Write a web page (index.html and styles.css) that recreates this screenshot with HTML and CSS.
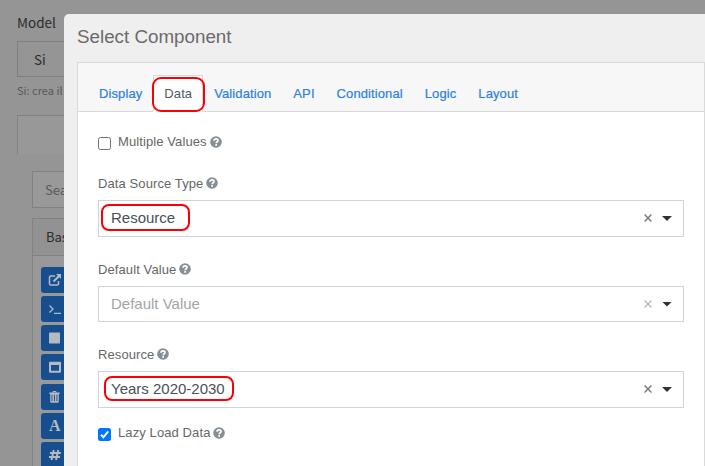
FILE: index.html
```html
<!DOCTYPE html>
<html lang="en">
<head>
<meta charset="utf-8">
<title>Select Component</title>
<link rel="stylesheet" href="styles.css">
</head>
<body>
<svg class="defs" width="0" height="0">
  <symbol id="help" viewBox="0 0 12 12"><circle cx="6" cy="6" r="5.8" fill="#868e96"/><path d="M4 4.7C4.1 2.2 8.1 2.2 8 4.5C8 5.8 6.3 5.7 6.2 7.2" fill="none" stroke="#fff" stroke-width="1.7"/><path d="M5.3 8.1h1.7v1.6H5.3z" fill="#fff"/></symbol>
  <symbol id="clear" viewBox="0 0 8 8"><path d="M.6.6l6.8 6.8M7.4.6L.6 7.4" fill="none" stroke="currentColor" stroke-width="1.4"/></symbol>
</svg>
<main class="page">
  <div class="field-title">Model</div>
  <div class="page-select">Si</div>
  <div class="hint">Si: crea il</div>
  <section class="builder">
    <div class="builder-head"></div>
    <div class="search">Search field(s)</div>
    <div class="group">
      <div class="group-head">Basic</div>
      <div class="group-body">
        <div class="item"><svg viewBox="0 0 14 14"><path d="M7 3H2.8Q1.5 3 1.5 4.3v6.4Q1.5 12 2.8 12h6.4q1.3 0 1.3-1.3V8" fill="none" stroke="currentColor" stroke-width="1.5"/><path d="M8 1h5v5l-1.7-1.7-5.1 5-1.4-1.5 5-5z"/></svg></div>
        <div class="item"><svg viewBox="0 0 14 14"><path d="M1.5 3.5L5 7l-3.5 3.5M6 11.4h7" fill="none" stroke="currentColor" stroke-width="1.3"/></svg></div>
        <div class="item"><svg viewBox="0 0 14 14"><rect x="1" y="1.5" width="11" height="11" rx=".7"/></svg></div>
        <div class="item"><svg viewBox="0 0 14 14"><path fill-rule="evenodd" d="M2 1.7h10q1 0 1 1v9q0 1-1 1H2q-1 0-1-1v-9q0-1 1-1zM3 5v5.7h8V5z"/></svg></div>
        <div class="item"><svg viewBox="0 0 14 14"><path fill-rule="evenodd" d="M4.3 2.5L5 1h3l.7 1.5h3V4h-.9v7.5q0 1.2-1.2 1.2H3.4q-1.2 0-1.2-1.2V4h-.9V2.5zM5.3 2.5h2.4L7.4 2H5.6zM3.5 4.8v6.4h.9V4.8zm2.5 0v6.4h.9V4.8zm2.5 0v6.4h.9V4.8z"/></svg></div>
        <div class="item letter">A</div>
        <div class="item"><svg viewBox="0 0 14 14"><path d="M5.8 2L3.5 12M10.3 2L8 12M1.9 5h11M1 9h11" fill="none" stroke="currentColor" stroke-width="1.9"/></svg></div>
      </div>
    </div>
  </section>
</main>
<div class="modal">
  <h1 class="title">Select Component</h1>
  <div class="card">
    <nav class="tabs">
      <a class="tab">Display</a><a class="tab active">Data<span class="mark mark-tab"></span></a><a class="tab">Validation</a><a class="tab">API</a><a class="tab">Conditional</a><a class="tab">Logic</a><a class="tab">Layout</a>
    </nav>
    <div class="form">
      <label class="check"><span class="box"></span>Multiple Values<svg class="help"><use href="#help"/></svg></label>
      <div class="label first">Data Source Type<svg class="help"><use href="#help"/></svg></div>
      <div class="select"><span class="value">Resource</span><span class="mark mark-source"></span><svg class="clear"><use href="#clear"/></svg><i class="caret"></i></div>
      <div class="label second">Default Value<svg class="help"><use href="#help"/></svg></div>
      <div class="select empty"><span class="value">Default Value</span><svg class="clear"><use href="#clear"/></svg><i class="caret"></i></div>
      <div class="label third">Resource<svg class="help"><use href="#help"/></svg></div>
      <div class="select"><span class="value">Years 2020-2030</span><span class="mark mark-resource"></span><svg class="clear"><use href="#clear"/></svg><i class="caret"></i></div>
      <label class="check lazy"><span class="box checked"><svg viewBox="0 0 13 13"><path d="M3 6.8l2.4 2.5 4.8-6" fill="none" stroke="#fff" stroke-width="2"/></svg></span>Lazy Load Data<svg class="help"><use href="#help"/></svg></label>
    </div>
  </div>
</div>
</body>
</html>
```
FILE: styles.css
```css
* { box-sizing: border-box; }
body { margin: 0; width: 705px; height: 466px; overflow: hidden; background: #959595; font-family: "Liberation Sans", Arial, sans-serif; }
.defs { position: absolute; }
.page { height: 466px; overflow: hidden; padding: 12px 0 0 17px; font-family: "Noto Sans CJK SC", sans-serif; color: #292b2d; white-space: nowrap; }
.field-title { height: 29px; font-size: 13.5px; line-height: 20px; }
.page-select { height: 36px; border: 1px solid #7d8083; padding-left: 16px; font-size: 13.5px; line-height: 34px; }
.hint { height: 38px; padding-top: 5px; font-size: 11px; line-height: 16px; color: #55595d; }
.builder { height: 380px; }
.builder-head { height: 39px; border: 1px solid #828282; border-bottom: 0; margin-bottom: 17px; background: #989898; }
.search { height: 37px; margin-left: 15px; border: 1px solid #7d8288; padding-left: 12px; font-size: 13px; line-height: 35px; color: #575a5d; background: #999; }
.group { height: 300px; margin: 10px 0 0 15px; border: 1px solid #828282; background: #999; }
.group-head { height: 37px; border-bottom: 1px solid #828282; padding-left: 13px; font-size: 13px; line-height: 35px; background: #929292; }
.group-body { display: flex; flex-direction: column; gap: 3.15px; padding: 11px 0 0 8px; }
.item { display: flex; flex: none; align-items: center; height: 26px; width: 150px; padding-left: 7px; border-radius: 3px; background: #174f8e; color: #b4bac1; }
.item svg { width: 14px; height: 14px; fill: currentColor; }
.letter { font: bold 16px/26px "Liberation Serif", serif; padding-left: 8px; }

.modal { position: absolute; left: 64px; top: 14px; width: 660px; height: 470px; padding: 11px 0 0 13px; border-radius: 5px; background: #efefef; color: #666; }
.title { margin: 0 0 13px; height: 24px; font-size: 18.8px; line-height: 24px; font-weight: 400; color: #6b6b6b; }
.card { width: 628px; height: 420px; border: 1px solid #dadada; background: #fff; }
.tabs { display: flex; height: 49px; padding: 12px 0 0 10px; border-bottom: 1px solid #d8d8d8; background: #f7f7f7; }
.tab { position: relative; height: 37px; padding: 0 10px; border: 1px solid transparent; font-size: 13px; line-height: 35px; letter-spacing: .1px; color: #2c80df; -webkit-text-stroke: .2px currentColor; }
.active { color: #52585e; background: #fff; border-color: #d8d8d8 #d8d8d8 #fff; -webkit-text-stroke: 0; }
.form { padding: 20px 20px 0; font-size: 13px; letter-spacing: .1px; }
.check { display: flex; height: 20px; align-items: center; line-height: 20px; }
.box { width: 13px; height: 13px; margin: 3px 7px 0 0; border: 1px solid #717171; border-radius: 2.5px; background: #fff; }
.checked { border: 0; background: #0075ff; }
.checked svg { display: block; width: 13px; height: 13px; }
.help { flex: none; width: 12px; height: 12px; margin: -1px 0 0 3px; }
.label { display: flex; align-items: center; height: 20px; }
.first { margin: 21px 0 7px; }
.second { margin: 22px 0 7px; }
.third { margin: 22px 0 7px; }
.select { position: relative; display: flex; align-items: center; width: 586px; height: 37px; border: 1px solid #ced4da; padding: 0 11px 2px 12px; color: #495057; font-size: 15px; letter-spacing: 0; }
.value { flex: 1; }
.clear { width: 8px; height: 8px; margin: 1px 10px 0 0; color: #777; }
.caret { width: 10px; height: 5px; margin-top: 2px; background: #333; clip-path: polygon(0 0, 100% 0, 50% 100%); }
.empty { height: 36px; color: #a1a5a9; }
.empty .clear { color: #bbb; }
.lazy { margin-top: 15px; }
.mark { position: absolute; border: 2px solid #fb0007; border-radius: 8px; }
.mark-tab { left: -2px; top: 1px; width: 53px; height: 35px; border-radius: 9px; }
.mark-source { left: 2px; top: 3px; width: 89px; height: 27px; }
.mark-resource { left: 5px; top: 4px; width: 130px; height: 25px; }
```
